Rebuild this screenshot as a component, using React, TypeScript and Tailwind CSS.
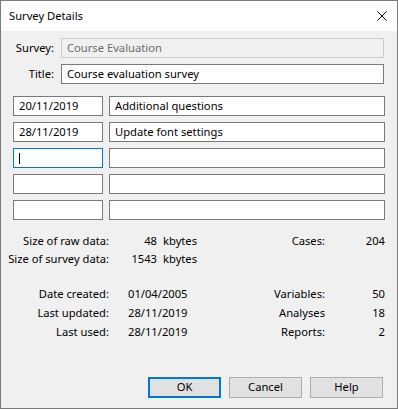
import React from 'react';

const font = { fontFamily: '"Noto Sans", Lato, Arial, sans-serif' };

const entries = [
  { date: '20/11/2019', text: 'Additional questions' },
  { date: '28/11/2019', text: 'Update font settings' },
  { date: '', text: '', focused: true },
  { date: '', text: '' },
  { date: '', text: '' },
];

const Box: React.FC<{ value?: string; className?: string; focused?: boolean }> = ({ value, className, focused }) => (
  <div
    className={
      'h-[20px] bg-white border flex items-center pl-[5px] text-black leading-none ' +
      (focused ? 'border-[#0078d7] ' : 'border-[#7a7a7a] ') +
      (className || '')
    }
  >
    {focused ? <span className="block w-px h-[11px] bg-black" /> : value}
  </div>
);

const Label: React.FC<{ children: React.ReactNode; w: string }> = ({ children, w }) => (
  <span className={'flex justify-end whitespace-nowrap shrink-0 ' + w}>{children}</span>
);

const App: React.FC = () => {
  return (
    <div
      className="w-[398px] h-[409px] border border-[#7a7a7a] bg-[#f0f0f0] flex flex-col text-[11.2px] text-black"
      style={font}
    >
      {/* title bar */}
      <div className="h-[30px] bg-white flex items-center justify-between pl-[8px] pr-[10px]">
        <span className="leading-none">Survey Details</span>
        <svg width="10" height="10" viewBox="0 0 10 10">
          <path d="M0.5 0.5 L9.5 9.5 M9.5 0.5 L0.5 9.5" stroke="#000" strokeWidth="1" />
        </svg>
      </div>

      <div className="flex-1 flex flex-col pl-[12px] pr-[12px] pt-[7px] pb-[10px]">
        <div className="flex items-center gap-[7px] pr-px">
          <Label w="w-[41px]">Survey:</Label>
          <div className="flex-1 h-[20px] border border-[#cccccc] bg-[#f0f0f0] flex items-center pl-[5px] text-[#6d6d6d]">
            Course Evaluation
          </div>
        </div>
        <div className="flex items-center gap-[7px] pr-px mt-[6px]">
          <Label w="w-[41px]">Title:</Label>
          <Box value="Course evaluation survey" className="flex-1" />
        </div>

        <div className="flex flex-col gap-[6px] mt-[12px]">
          {entries.map((e, i) => (
            <div key={i} className="flex gap-[6px]">
              <Box value={e.date} focused={e.focused} className="w-[90px]" />
              <Box value={e.text} className="flex-1" />
            </div>
          ))}
        </div>

        <div className="mt-[12px] flex flex-col">
          <div className="h-[18px] flex items-center">
            <Label w="w-[96px]">Size of raw data:</Label>
            <Label w="w-[48px]">48</Label>
            <span className="ml-[6px]">kbytes</span>
            <span className="flex-1" />
            <Label w="w-[80px]">Cases:</Label>
            <Label w="w-[60px]">204</Label>
          </div>
          <div className="h-[18px] flex items-center">
            <Label w="w-[96px]">Size of survey data:</Label>
            <Label w="w-[48px]">1543</Label>
            <span className="ml-[6px]">kbytes</span>
          </div>
        </div>

        <div className="mt-[17px] flex flex-col">
          {[
            ['Date created:', '01/04/2005', 'Variables:', '50'],
            ['Last updated:', '28/11/2019', 'Analyses', '18'],
            ['Last used:', '28/11/2019', 'Reports:', '2'],
          ].map(([l, v, rl, rv]) => (
            <div key={l} className="h-[19px] flex items-center">
              <Label w="w-[96px]">{l}</Label>
              <span className="pl-[19px]">{v}</span>
              <span className="flex-1" />
              <Label w="w-[80px]">{rl}</Label>
              <Label w="w-[60px]">{rv}</Label>
            </div>
          ))}
        </div>

        <div className="mt-auto flex justify-end gap-[8px] pr-[2px]">
          <button className="w-[73px] h-[21px] border-2 border-[#0078d7] bg-[#e1e1e1]">OK</button>
          <button className="w-[73px] h-[21px] border border-[#adadad] bg-[#e1e1e1]">Cancel</button>
          <button className="w-[73px] h-[21px] border border-[#adadad] bg-[#e1e1e1]">Help</button>
        </div>
      </div>
    </div>
  );
};

export default App;
